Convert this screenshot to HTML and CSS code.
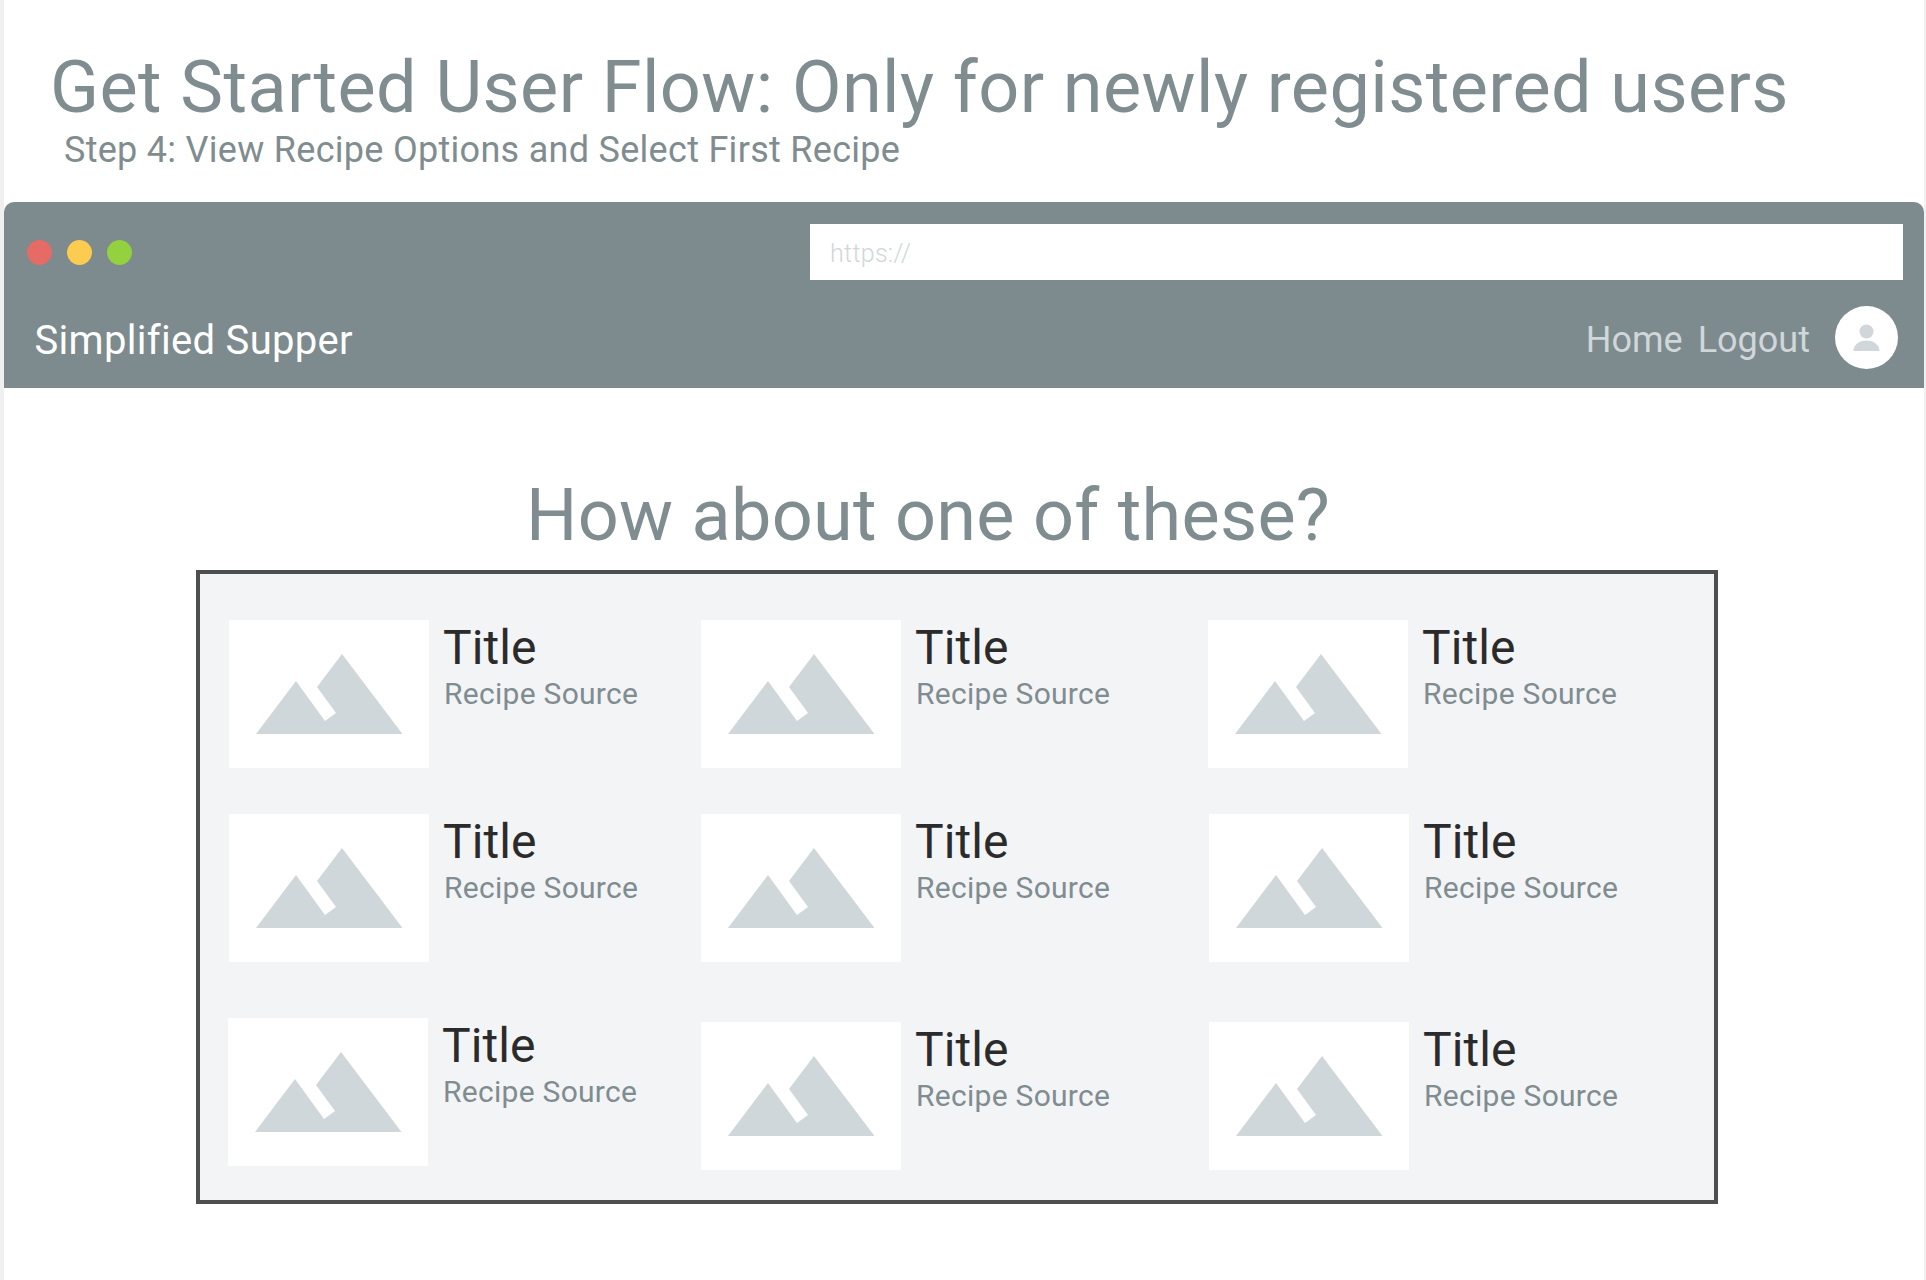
FILE: index.html
```html
<!DOCTYPE html>
<html lang="en">
<head>
<meta charset="utf-8">
<title>Get Started User Flow</title>
<link rel="stylesheet" href="styles.css">
</head>
<body>
<svg class="defs" width="0" height="0" aria-hidden="true">
  <symbol id="mountain" viewBox="0 0 200 148">
    <polygon points="27,114 67,61 96,101 107,93 88,67 113,34 173.5,114"/>
  </symbol>
</svg>
<main class="page">
  <header class="flow-head">
    <h1 class="flow-title">Get Started User Flow: Only for newly registered users</h1>
    <p class="flow-step">Step 4: View Recipe Options and Select First Recipe</p>
  </header>
  <section class="browser">
    <div class="chrome">
      <div class="dots">
        <span class="dot dot-red"></span>
        <span class="dot dot-yellow"></span>
        <span class="dot dot-green"></span>
      </div>
      <div class="url">https://</div>
    </div>
    <nav class="nav">
      <span class="brand">Simplified Supper</span>
      <div class="nav-links">
        <a class="nav-link">Home</a>
        <a class="nav-link">Logout</a>
        <span class="avatar">
          <svg viewBox="0 0 63 63" width="63" height="63"><circle cx="31.5" cy="25.5" r="7"/><path d="M18.5 45C18.5 37.5 26 34.5 31.5 34.5S44.5 37.5 44.5 45Z"/></svg>
        </span>
      </div>
    </nav>
  </section>
  <h2 class="question">How about one of these?</h2>
  <section class="panel">
    <article class="card card-in"><div class="thumb"><svg class="pic"><use href="#mountain"/></svg></div><div class="info"><h3 class="card-title">Title</h3><p class="card-source">Recipe Source</p></div></article>
    <article class="card"><div class="thumb"><svg class="pic"><use href="#mountain"/></svg></div><div class="info"><h3 class="card-title">Title</h3><p class="card-source">Recipe Source</p></div></article>
    <article class="card"><div class="thumb"><svg class="pic"><use href="#mountain"/></svg></div><div class="info"><h3 class="card-title">Title</h3><p class="card-source">Recipe Source</p></div></article>
    <article class="card card-in"><div class="thumb"><svg class="pic"><use href="#mountain"/></svg></div><div class="info"><h3 class="card-title">Title</h3><p class="card-source">Recipe Source</p></div></article>
    <article class="card"><div class="thumb"><svg class="pic"><use href="#mountain"/></svg></div><div class="info"><h3 class="card-title">Title</h3><p class="card-source">Recipe Source</p></div></article>
    <article class="card card-in"><div class="thumb"><svg class="pic"><use href="#mountain"/></svg></div><div class="info"><h3 class="card-title">Title</h3><p class="card-source">Recipe Source</p></div></article>
    <article class="card"><div class="thumb"><svg class="pic"><use href="#mountain"/></svg></div><div class="info"><h3 class="card-title">Title</h3><p class="card-source">Recipe Source</p></div></article>
    <article class="card card-low"><div class="thumb"><svg class="pic"><use href="#mountain"/></svg></div><div class="info"><h3 class="card-title">Title</h3><p class="card-source">Recipe Source</p></div></article>
    <article class="card card-low card-in"><div class="thumb"><svg class="pic"><use href="#mountain"/></svg></div><div class="info"><h3 class="card-title">Title</h3><p class="card-source">Recipe Source</p></div></article>
  </section>
</main>
</body>
</html>
```
FILE: styles.css
```css
* { box-sizing: border-box; }
html, body { margin: 0; padding: 0; }
body {
  background: #f0f0f0;
  font-family: Roboto, "Liberation Sans", sans-serif;
  color: #7f8c90;
}
.defs { position: absolute; }
.page {
  margin: 0 2px 0 4px;
  background: #fff;
  min-height: 1280px;
  overflow: hidden;
}
.flow-head { padding: 46px 0 31px 46px; }
.flow-title {
  margin: 0;
  font-size: 72px;
  font-weight: 400;
  letter-spacing: 0.41px;
  line-height: 83px;
  white-space: nowrap;
}
.flow-step {
  margin: 0 0 0 14px;
  font-size: 36px;
  font-weight: 400;
  letter-spacing: 0.29px;
  line-height: 42px;
  white-space: nowrap;
}
.browser {
  height: 186px;
  background: #7d8a8e;
  border-radius: 10px 10px 0 0;
  display: flex;
  flex-direction: column;
}
.chrome {
  display: flex;
  justify-content: space-between;
  padding: 22px 21px 0 22.5px;
}
.dots { display: flex; gap: 15px; align-items: center; height: 56px; }
.dot { width: 25px; height: 25px; border-radius: 50%; }
.dot-red { background: #e56b64; }
.dot-yellow { background: #fbcc4f; }
.dot-green { background: #93d13f; }
.url {
  width: 1093px;
  height: 56px;
  background: #fff;
  color: #d0d7da;
  font-size: 25px;
  letter-spacing: 0.3px;
  line-height: 60px;
  padding-left: 20px;
  font-weight: 300;
}
.nav {
  flex: 1;
  display: flex;
  align-items: center;
  justify-content: space-between;
  padding: 6px 26px 0 30.5px;
}
.brand { color: #fff; font-size: 40px; letter-spacing: 0.3px; padding-top: 6px; }
.nav-links { display: flex; align-items: center; }
.nav-link { color: #d0d7da; font-size: 36px; margin-right: 15px; padding-top: 6px; }
.nav-link + .nav-link { margin-right: 25px; }
.avatar {
  width: 63px;
  height: 63px;
  border-radius: 50%;
  background: #fff;
  display: block;
}
.avatar svg { display: block; fill: #d0d7da; }
.question {
  margin: 86px 0 12px 522px;
  font-size: 72px;
  font-weight: 400;
  letter-spacing: 0.28px;
  line-height: 84px;
  white-space: nowrap;
}
.panel {
  margin-left: 192px;
  width: 1522px;
  height: 634px;
  background: #f3f4f6;
  border: 4px solid #4d4e50;
  padding: 46px 0 0 28px;
  display: grid;
  grid-template-columns: 473px 507px 1fr;
  grid-template-rows: 194px 204px 148px;
}
.card { display: flex; align-items: flex-start; }
.card-in { margin-left: 1px; }
.card-low { margin-top: 4px; }
.thumb {
  width: 200px;
  height: 148px;
  background: #fff;
  flex: none;
}
.pic { display: block; width: 200px; height: 148px; fill: #d0d7da; }
.info { padding: 0 0 0 14px; }
.card-title {
  margin: 0;
  font-size: 48px;
  font-weight: 400;
  letter-spacing: 0.1px;
  line-height: 56px;
  color: #2b2b2b;
}
.card-source {
  margin: 0 0 0 1px;
  font-size: 30px;
  letter-spacing: 0.28px;
  line-height: 36px;
  color: #7f8c90;
  white-space: nowrap;
}
```
